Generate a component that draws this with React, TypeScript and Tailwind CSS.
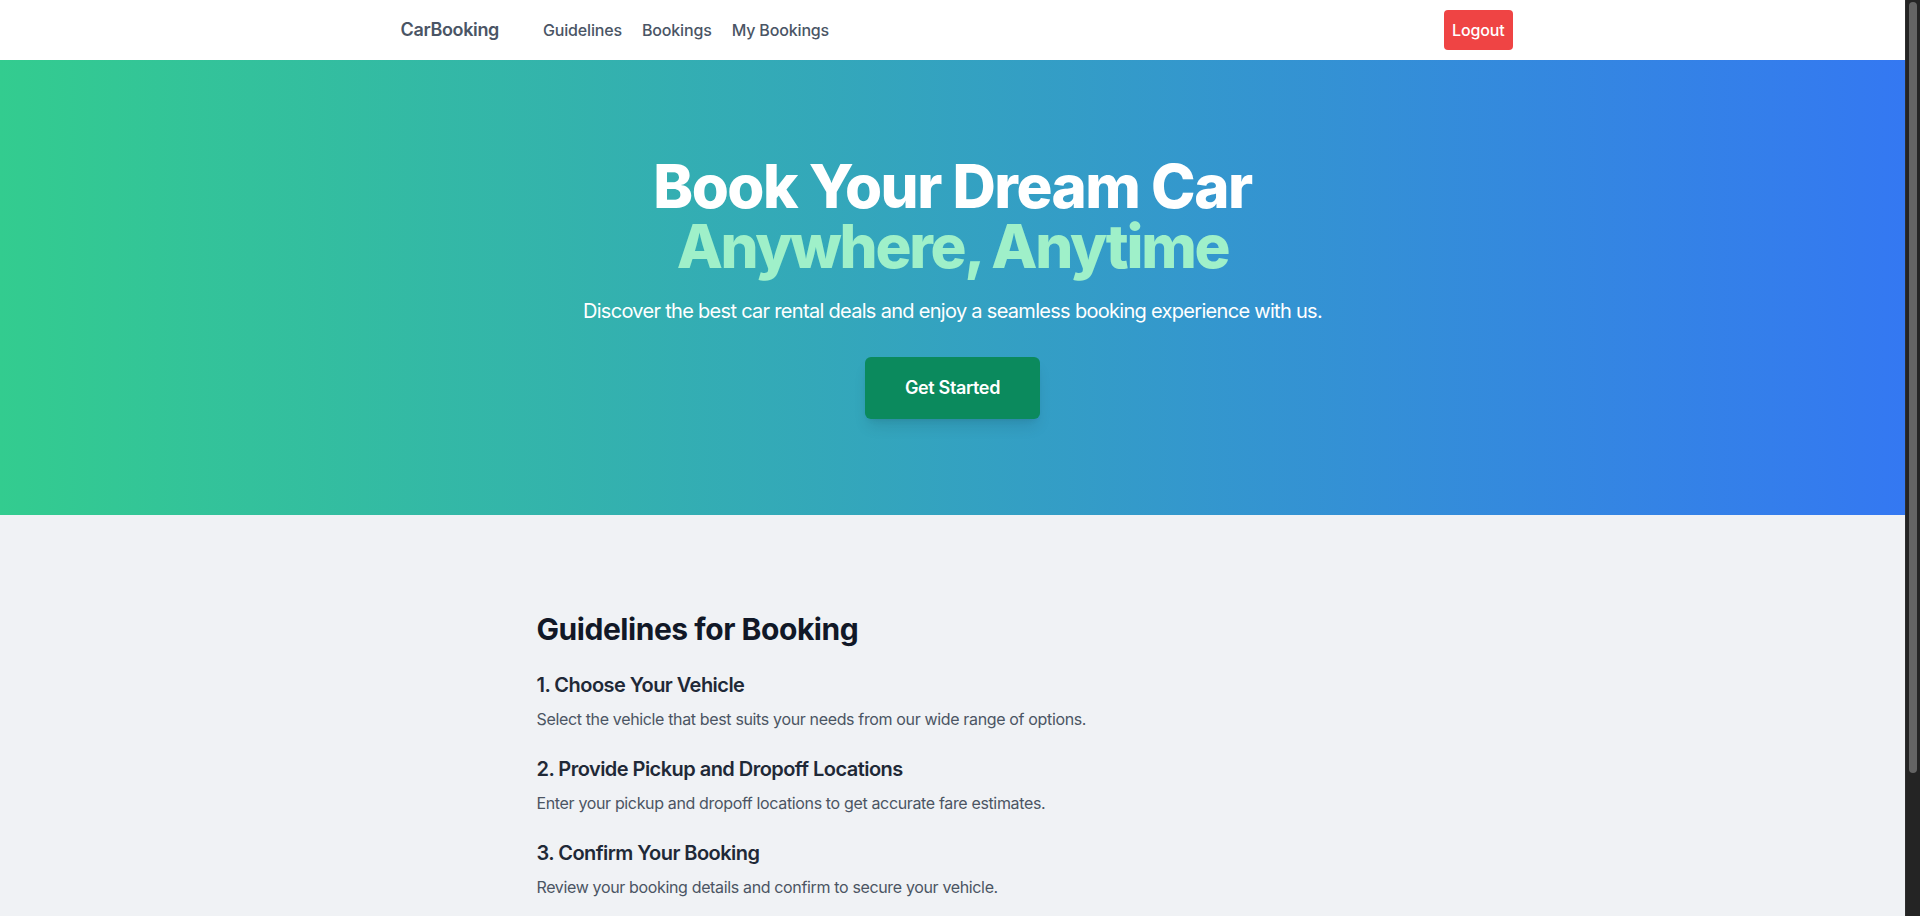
const steps = [
  {
    title: "1. Choose Your Vehicle",
    text: "Select the vehicle that best suits your needs from our wide range of options.",
  },
  {
    title: "2. Provide Pickup and Dropoff Locations",
    text: "Enter your pickup and dropoff locations to get accurate fare estimates.",
  },
  {
    title: "3. Confirm Your Booking",
    text: "Review your booking details and confirm to secure your vehicle.",
  },
  {
    title: "4. Enjoy Your Ride",
    text: "Pick up your car at the chosen time and enjoy a comfortable journey.",
  },
];

function Navbar() {
  return (
    <nav className="bg-white h-[60px]">
      <div className="max-w-6xl mx-auto px-4 h-full flex items-center justify-between">
        <div className="flex items-center">
          <span className="ml-2 text-lg font-semibold tracking-[-0.02em] text-gray-600">CarBooking</span>
          <div className="ml-11 flex items-center gap-5 text-base font-medium tracking-[-0.01em] text-gray-600">
            <a href="#">Guidelines</a>
            <a href="#">Bookings</a>
            <a href="#">My Bookings</a>
          </div>
        </div>
        <button className="bg-[#ef4444] text-white font-medium tracking-[-0.01em] px-2 py-2 rounded">Logout</button>
      </div>
    </nav>
  );
}

function Hero() {
  return (
    <section className="bg-linear-to-r/srgb from-[#33cc8f] to-[#3478f2] py-24 text-center">
      <h1 className="text-6xl font-extrabold tracking-tight text-white leading-none">
        Book Your Dream Car
        <br />
        <span className="text-[#9ff0c9] tracking-[-0.038em]">Anywhere, Anytime</span>
      </h1>
      <p className="mt-[21px] text-xl tracking-[-0.035em] text-white">
        Discover the best car rental deals and enjoy a seamless booking experience with us.
      </p>
      <button className="mt-8 bg-[#0b8a5d] text-white text-lg font-semibold tracking-[-0.02em] px-10 py-[17px] rounded-md shadow-lg">
        Get Started
      </button>
    </section>
  );
}

function Guidelines() {
  return (
    <section className="bg-[#f0f2f5] py-16">
      <div className="max-w-4xl mx-auto p-8">
        <h2 className="text-3xl font-bold tracking-[-0.015em] text-[#111827] mb-6">Guidelines for Booking</h2>
        <div className="flex flex-col gap-6">
          {steps.map((s) => (
            <div key={s.title}>
              <h3 className="text-xl font-semibold tracking-[-0.027em] text-[#1f2937]">{s.title}</h3>
              <p className="mt-2 text-base tracking-[-0.022em] text-[#4b5563]">{s.text}</p>
            </div>
          ))}
        </div>
      </div>
    </section>
  );
}

// window scrollbar as it shows in the screenshot
function Scrollbar() {
  return (
    <div className="w-[15px] shrink-0 bg-[#242424] border-l border-[#2e2e2e] px-[3px] pt-[2px]">
      <div className="h-[771px] rounded-full bg-[#646464]" />
    </div>
  );
}

export default function App() {
  return (
    <div className="flex h-screen overflow-hidden font-['Inter',_'Liberation_Sans',_sans-serif]">
      <main className="flex-1 min-w-0">
        <Navbar />
        <Hero />
        <Guidelines />
      </main>
      <Scrollbar />
    </div>
  );
}
